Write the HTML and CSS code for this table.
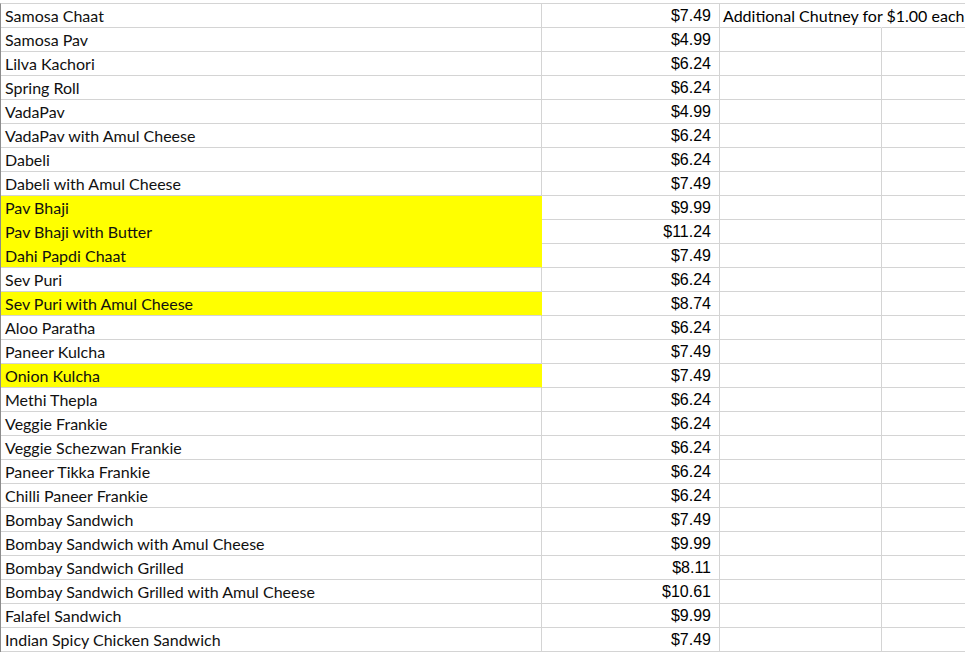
FILE: index.html
```html
<!DOCTYPE html>
<html>
<head>
<meta charset="utf-8">
<link rel="stylesheet" href="styles.css">
</head>
<body>
<div class="sheet">
  <div class="row"><div class="c name">Samosa Chaat</div><div class="c price">$7.49</div><div class="c note">Additional Chutney for $1.00 each</div><div class="c last"></div></div>
  <div class="row"><div class="c name">Samosa Pav</div><div class="c price">$4.99</div><div class="c"></div><div class="c last"></div></div>
  <div class="row"><div class="c name">Lilva Kachori</div><div class="c price">$6.24</div><div class="c"></div><div class="c last"></div></div>
  <div class="row"><div class="c name">Spring Roll</div><div class="c price">$6.24</div><div class="c"></div><div class="c last"></div></div>
  <div class="row"><div class="c name">VadaPav</div><div class="c price">$4.99</div><div class="c"></div><div class="c last"></div></div>
  <div class="row"><div class="c name">VadaPav with Amul Cheese</div><div class="c price">$6.24</div><div class="c"></div><div class="c last"></div></div>
  <div class="row"><div class="c name">Dabeli</div><div class="c price">$6.24</div><div class="c"></div><div class="c last"></div></div>
  <div class="row"><div class="c name">Dabeli with Amul Cheese</div><div class="c price">$7.49</div><div class="c"></div><div class="c last"></div></div>
  <div class="row"><div class="c name hl hl-cont">Pav Bhaji</div><div class="c price">$9.99</div><div class="c"></div><div class="c last"></div></div>
  <div class="row"><div class="c name hl hl-cont">Pav Bhaji with Butter</div><div class="c price">$11.24</div><div class="c"></div><div class="c last"></div></div>
  <div class="row"><div class="c name hl">Dahi Papdi Chaat</div><div class="c price">$7.49</div><div class="c"></div><div class="c last"></div></div>
  <div class="row"><div class="c name">Sev Puri</div><div class="c price">$6.24</div><div class="c"></div><div class="c last"></div></div>
  <div class="row"><div class="c name hl">Sev Puri with Amul Cheese</div><div class="c price">$8.74</div><div class="c"></div><div class="c last"></div></div>
  <div class="row"><div class="c name">Aloo Paratha</div><div class="c price">$6.24</div><div class="c"></div><div class="c last"></div></div>
  <div class="row"><div class="c name">Paneer Kulcha</div><div class="c price">$7.49</div><div class="c"></div><div class="c last"></div></div>
  <div class="row"><div class="c name hl">Onion Kulcha</div><div class="c price">$7.49</div><div class="c"></div><div class="c last"></div></div>
  <div class="row"><div class="c name">Methi Thepla</div><div class="c price">$6.24</div><div class="c"></div><div class="c last"></div></div>
  <div class="row"><div class="c name">Veggie Frankie</div><div class="c price">$6.24</div><div class="c"></div><div class="c last"></div></div>
  <div class="row"><div class="c name">Veggie Schezwan Frankie</div><div class="c price">$6.24</div><div class="c"></div><div class="c last"></div></div>
  <div class="row"><div class="c name">Paneer Tikka Frankie</div><div class="c price">$6.24</div><div class="c"></div><div class="c last"></div></div>
  <div class="row"><div class="c name">Chilli Paneer Frankie</div><div class="c price">$6.24</div><div class="c"></div><div class="c last"></div></div>
  <div class="row"><div class="c name">Bombay Sandwich</div><div class="c price">$7.49</div><div class="c"></div><div class="c last"></div></div>
  <div class="row"><div class="c name">Bombay Sandwich with Amul Cheese</div><div class="c price">$9.99</div><div class="c"></div><div class="c last"></div></div>
  <div class="row"><div class="c name">Bombay Sandwich Grilled</div><div class="c price">$8.11</div><div class="c"></div><div class="c last"></div></div>
  <div class="row"><div class="c name">Bombay Sandwich Grilled with Amul Cheese</div><div class="c price">$10.61</div><div class="c"></div><div class="c last"></div></div>
  <div class="row"><div class="c name">Falafel Sandwich</div><div class="c price">$9.99</div><div class="c"></div><div class="c last"></div></div>
  <div class="row"><div class="c name">Indian Spicy Chicken Sandwich</div><div class="c price">$7.49</div><div class="c"></div><div class="c last"></div></div>
</div>
</body>
</html>
```
FILE: styles.css
```css
html, body {
  margin: 0;
  padding: 0;
  background: #ffffff;
}
body {
  overflow: hidden;
}
.sheet {
  margin-top: 3px;
  border-top: 1px solid #d4d4d4;
  border-left: 1px solid #8c8c8c;
}
.row {
  display: grid;
  grid-template-columns: 541px 178px 162px 1fr;
  height: 24px;
}
.c {
  border-right: 1px solid #d4d4d4;
  border-bottom: 1px solid #d4d4d4;
  box-sizing: border-box;
  height: 24px;
  padding-top: 1px;
  line-height: 22px;
  white-space: nowrap;
  overflow: visible;
  color: #000;
  min-width: 0;
}
.last {
  border-right: none;
}
.name {
  font-family: "Lato", sans-serif;
  font-size: 16px;
  padding-left: 4px;
  color: #111;
}
.price {
  font-family: "Liberation Sans", Arial, sans-serif;
  font-size: 16px;
  text-align: right;
  padding-right: 8px;
}
.note {
  font-family: "Lato", sans-serif;
  font-size: 16px;
  padding-left: 3px;
  border-right-color: transparent;
  position: relative;
  z-index: 1;
}
.hl {
  background: #ffff00;
  border-right-color: #ffff00;
}
.hl-cont {
  border-bottom-color: #ffff00;
}
```
